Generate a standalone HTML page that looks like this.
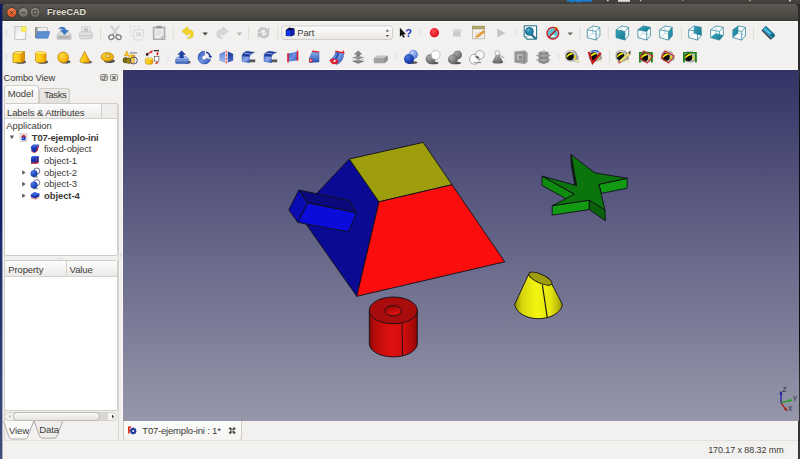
<!DOCTYPE html>
<html>
<head>
<meta charset="utf-8">
<title>FreeCAD</title>
<style>
*{box-sizing:border-box;margin:0;padding:0}
html,body{width:800px;height:459px;overflow:hidden;background:#f2f1f0;font-family:"Liberation Sans",sans-serif;font-size:10px;color:#3c3b37}
.abs{position:absolute}
#desk{left:0;top:0;width:800px;height:459px;background:#2e2d2a}
#deskl{left:0;top:4px;width:3px;height:455px;background:linear-gradient(#0c1a60,#0f1f6a 48%,#1b2d6c 52%,#27386e 72%,#3f4e7c)}
#deskr{left:798px;top:4px;width:2px;height:455px;background:linear-gradient(#2b2b29,#2b2b2c 15%,#0c0c12 19%,#0c0c12 74%,#2a2a2c 84%,#3a3a3a)}
#topbar{left:0;top:0;width:800px;height:4px;background:linear-gradient(#464540,#3c3b37)}
#title{left:2px;top:4px;width:796px;height:17px;border-radius:4px 4px 0 0;background:linear-gradient(#605e56,#58564e 10%,#504e47 50%,#44433e 88%,#343330 100%);}
#title .t{left:45px;top:3px;font-weight:bold;font-size:9px;color:#e6e1d6;letter-spacing:0.1px;line-height:11px;text-shadow:0 -0.6px 0.5px rgba(30,28,24,0.8)}
#win{left:2px;top:20.5px;width:796px;height:438.5px;background:#f2f1f0;border-top:1.3px solid #fdfdfd}
#view{left:123px;top:69.5px;width:675.5px;height:351px;background:linear-gradient(#333366,#9797aa);box-shadow:-1px -1px 0 #fbfbfa}

#combo-t{left:3.6px;top:72px;letter-spacing:-0.15px;font-size:9.4px;line-height:11px;color:#3c3b37}
.dbtn{width:7.5px;height:7px;border:1px solid #8f8d88;border-radius:2px;background:#eceae7}
#tabM{left:4px;top:85px;width:34.5px;height:18px;border:1px solid #d2cfc9;border-bottom:none;border-radius:3px 3px 0 0;background:linear-gradient(#fbfbfa,#f2f1f0)}
#tabT{left:38.5px;top:88px;width:31.5px;height:15px;border:1px solid #d0cdc7;border-bottom:none;border-radius:3px 3px 0 0;background:linear-gradient(#ecebe8,#e2e0dc)}
.tabtx{font-size:9.5px;line-height:11px;color:#3c3b37;letter-spacing:-0.1px}
#tree{left:4px;top:103px;width:114px;height:153px;border:1px solid #d0cdc8;background:#fff;border-radius:2px}
#treeh{left:0;top:0;width:112px;height:15px;background:#efeeed;border-bottom:1px solid #d5d2cd}
#treeh .sec{left:0;top:0;width:97px;height:14px;background:linear-gradient(#fdfdfd,#ebeae8);border-right:1px solid #cfccc6}
.row{left:0;font-size:9.5px;line-height:11px;color:#3c3b37;white-space:nowrap;letter-spacing:-0.1px}
#prop{left:4px;top:260px;width:114px;height:151px;border:1px solid #d0cdc8;background:#fff;border-radius:2px}
#proph{left:0;top:0;width:112px;height:15.5px;background:linear-gradient(#fdfdfd,#ebeae8);border-bottom:1px solid #d5d2cd}
#sb{left:4px;top:412px;width:113px;height:9px;border-radius:4.5px;background:linear-gradient(90deg,#f1f0ee 0,#f1f0ee 9px,#d9d7d3 9px,#d9d7d3 103.5px,#f6f5f4 103.5px);border:1px solid #d3d0cb}
#sbh{left:8px;top:-1px;width:87px;height:9px;border-radius:4px;background:linear-gradient(#fbfbfa,#e4e2df);border:1px solid #bdb9b3}
#dockb{left:4px;top:103px;width:115px;height:337.5px;border:1px solid #d9d7d3;border-radius:3px}

#mtab{left:123px;top:420.5px;width:119px;height:20px;background:linear-gradient(#fbfbfa,#f6f5f4);border:1px solid #cdcac4;border-top:none;border-radius:0 0 3.5px 3.5px}
#stline{left:2px;top:440px;width:796px;height:1px;background:#e3e1dd}
#deskl2{left:2px;top:6px;width:1px;height:453px;background:linear-gradient(#0c1a60,#0f1f6a 48%,#1b2d6c 52%,#27386e 72%,#3f4e7c);opacity:.4}
</style>
</head>
<body>
<div id="desk" class="abs"></div>
<div id="topbar" class="abs"></div>
<svg class="abs" style="left:0;top:0" width="800" height="4" viewBox="0 0 800 4"><g>
<rect x="567" y="0" width="25" height="1.6" fill="#1b7fd0"/><rect x="570" y="1.6" width="3" height="1" fill="#1b7fd0"/><rect x="576" y="1.6" width="6" height="0.8" fill="#1b7fd0"/><rect x="585" y="1.6" width="2" height="0.8" fill="#1b7fd0"/>
<rect x="618" y="0" width="12" height="1.8" fill="#dddcd8"/><rect x="607" y="0" width="1.6" height="1.2" fill="#d8d8d4"/><rect x="640" y="0" width="1.4" height="1.2" fill="#c8c8c4"/>
<rect x="749" y="0" width="1.6" height="1.2" fill="#d8a070"/><rect x="789" y="0" width="1.8" height="1.4" fill="#d8d8d4"/><rect x="682" y="0" width="1.5" height="1" fill="#88877f"/>
</g></svg>
<div id="deskl" class="abs"></div>
<div id="deskr" class="abs"></div>
<div id="title" class="abs"><div class="t abs">FreeCAD</div></div>
<svg class="abs" style="left:0;top:0" width="60" height="22" viewBox="0 0 60 22">
<defs><radialGradient id="gclose" cx="0.5" cy="0.3" r="0.8"><stop offset="0" stop-color="#f58a5a"/><stop offset="1" stop-color="#dd4814"/></radialGradient>
<linearGradient id="gwb" x1="0" y1="0" x2="0" y2="1"><stop offset="0" stop-color="#8f8d86"/><stop offset="1" stop-color="#6a6962"/></linearGradient></defs>
<circle cx="11.7" cy="12.5" r="5.1" fill="#33322e"/><circle cx="11.7" cy="12.5" r="4.5" fill="url(#gclose)"/>
<path d="M10.2,11 L13.2,14 M13.2,11 L10.2,14" stroke="#5e2410" stroke-width="1" stroke-linecap="round"/>
<circle cx="23.4" cy="12.5" r="5.1" fill="#33322e"/><circle cx="23.4" cy="12.5" r="4.5" fill="url(#gwb)"/>
<path d="M21.4,12.6 L25.4,12.6" stroke="#45443f" stroke-width="1.1"/>
<circle cx="35.1" cy="12.5" r="5.1" fill="#33322e"/><circle cx="35.1" cy="12.5" r="4.5" fill="url(#gwb)"/>
<rect x="33.3" y="10.7" width="3.6" height="3.6" fill="none" stroke="#45443f" stroke-width="1"/>
</svg>
<div id="win" class="abs"></div>
<div id="view" class="abs"></div>
<svg id="scene" class="abs" style="left:0;top:0" width="800" height="459" viewBox="0 0 800 459">
<defs>
<linearGradient id="cylside" x1="0" x2="1" y1="0" y2="0"><stop offset="0" stop-color="#8a0606"/><stop offset="0.12" stop-color="#b80b0b"/><stop offset="0.45" stop-color="#e01010"/><stop offset="0.7" stop-color="#d40e0e"/><stop offset="0.92" stop-color="#a80909"/><stop offset="1" stop-color="#8a0606"/></linearGradient>
<linearGradient id="hole" x1="0.2" x2="0.8" y1="0" y2="1"><stop offset="0" stop-color="#960808"/><stop offset="0.55" stop-color="#c80e0e"/><stop offset="1" stop-color="#e01212"/></linearGradient>
<linearGradient id="coneside" x1="0" x2="1" y1="0" y2="0"><stop offset="0" stop-color="#8c8c06"/><stop offset="0.15" stop-color="#d6d60c"/><stop offset="0.45" stop-color="#f4f412"/><stop offset="0.75" stop-color="#e6e60e"/><stop offset="0.93" stop-color="#b4b408"/><stop offset="1" stop-color="#8c8c06"/></linearGradient>
</defs>
<g stroke="#101018" stroke-width="0.9" stroke-linejoin="round">
<!-- pyramid -->
<polygon points="349.3,159 379,201.8 356.8,296.3 298.2,212.9" fill="#0a0a94"/>
<polygon points="349.3,159 423.2,142.4 452,184.7 379,201.8" fill="#9e9e0c"/>
<polygon points="379,201.8 452,184.7 504.8,261.8 356.8,296.3" fill="#fb0d0d"/>
<!-- small box -->
<polygon points="298.8,190 349.3,200.4 356.6,212.7 307.5,203" fill="#0a0a7c"/>
<polygon points="298.8,190 307.5,203 297.8,222.4 288.8,209.8" fill="#0b0bb2"/>
<polygon points="307.5,203 356.6,212.7 348.5,231.8 297.8,222.4" fill="#0c0cda"/>
<!-- cylinder -->
<path d="M369.3,310.4 L369.3,343.5 A24,13.4 0 0 0 417.3,343.5 L417.3,310.4 Z" fill="url(#cylside)"/>
<ellipse cx="393.3" cy="310.4" rx="24" ry="13.4" fill="#a80c0c"/>
<ellipse cx="393.1" cy="310.8" rx="8.2" ry="5.1" fill="url(#hole)"/>
<line x1="402" y1="323.3" x2="402.5" y2="356"/>
<!-- cone -->
<path d="M529,273.6 L514.6,304.4 A24,15.7 0 0 0 562.4,304.4 L551.8,284 Z" fill="url(#coneside)"/>
<ellipse cx="540.4" cy="278.6" rx="12.6" ry="4.4" transform="rotate(24.5 540.4 278.6)" fill="#9c9c0c"/>
<line x1="542.4" y1="285.1" x2="547.3" y2="317.8" stroke-width="1.1"/>
<!-- star -->
<polygon points="571.1,154.6 576.6,185.6 576.6,194.9 571.1,163.9" fill="#052e05"/>
<polygon points="542,176.1 542,185.4 574.3,203.4 574.3,194.1" fill="#0f8c0f"/>
<polygon points="552.2,205.7 589.3,200.2 589.3,209.6 552.2,215.1" fill="#129a12"/>
<polygon points="589.3,200.2 605,210 605.4,220.8 589.3,209.6" fill="#0a630a"/>
<polygon points="598.9,184.3 627.2,178.3 627.2,188.2 601.2,193.4" fill="#129a12"/>
<polygon points="571.1,154.6 594.8,172.8 627.2,178.3 598.9,184.3 605,210 589.3,200.2 552.2,205.7 574.3,194.1 542,176.1 576.6,185.6" fill="#0c740c"/>
</g>
<!-- axis -->
<g stroke-width="1.3" fill="none">
<line x1="781" y1="402.7" x2="781" y2="392" stroke="#2020a0"/>
<line x1="781" y1="402.7" x2="791.5" y2="400.2" stroke="#20a020"/>
<line x1="781" y1="402.7" x2="786.3" y2="410.3" stroke="#a02020"/>
</g>
<polygon points="781,390.5 779.6,394.5 782.4,394.5" fill="#2020a0"/>
<polygon points="792.6,400 788.8,399.2 789.4,402" fill="#20a020"/>
<polygon points="787.2,411.5 783.8,408.8 786.4,407.2" fill="#a02020"/>
<g font-family="Liberation Sans, sans-serif" font-size="6.5" fill="#222230">
<text x="782.6" y="391.8">Z</text><text x="792.8" y="401">Y</text><text x="788" y="411.2">X</text>
</g>
</svg>
<div id="combo-t" class="abs">Combo View</div>
<div class="abs dbtn" style="left:100px;top:74.3px"></div><div class="abs dbtn" style="left:110.3px;top:74.3px"></div>
<svg class="abs" style="left:98px;top:72px" width="22" height="12" viewBox="98 72 22 12"><g stroke="#55534f" stroke-width="0.7" fill="none"><rect x="102" y="76.8" width="2.8" height="2.6"/><path d="M103.6,76 L106,76 L106,78.4"/><path d="M112.4,76.2 L115.6,79.4 M115.6,76.2 L112.4,79.4" stroke-width="1.1"/></g></svg>
<div id="tabT" class="abs"><div class="abs tabtx" style="left:4.6px;top:-0.2px;letter-spacing:-0.4px">Tasks</div></div>
<div id="tabM" class="abs"><div class="abs tabtx" style="left:2.8px;top:1.8px">Model</div></div>
<div id="dockb" class="abs"></div>
<div id="tree" class="abs">
<div id="treeh" class="abs"><div class="sec abs"></div><div class="abs tabtx" style="left:2px;top:2.8px">Labels &amp; Attributes</div></div>
<div class="row abs" style="left:1.3px;top:15.9px">Application</div>
<div class="row abs" style="left:26.8px;top:28.1px;font-weight:bold;letter-spacing:-0.2px">T07-ejemplo-ini</div>
<div class="row abs" style="left:39.0px;top:39.2px">fixed-object</div>
<div class="row abs" style="left:39.0px;top:50.9px">object-1</div>
<div class="row abs" style="left:39.0px;top:62.7px">object-2</div>
<div class="row abs" style="left:39.0px;top:74.4px">object-3</div>
<div class="row abs" style="left:39.0px;top:86.1px;font-weight:bold">object-4</div>
</div>
<div id="prop" class="abs"><div id="proph" class="abs"><div class="abs" style="left:61px;top:0;width:1px;height:15px;background:#d3d0cb"></div><div class="abs tabtx" style="left:3.2px;top:3.3px">Property</div><div class="abs tabtx" style="left:64.6px;top:3.3px">Value</div></div></div>
<svg class="abs" style="left:50px;top:250px" width="80" height="12" viewBox="50 250 80 12"><g fill="#d6d4d0"><rect x="58.6" y="258" width="1" height="1"/><rect x="60.4" y="258" width="1" height="1"/><rect x="62.2" y="258" width="1" height="1"/><rect x="120.4" y="253.4" width="2" height="0.8"/><rect x="120.4" y="255.2" width="2" height="0.8"/><rect x="120.4" y="257" width="2" height="0.8"/></g></svg>
<div id="sb" class="abs"><div id="sbh" class="abs"></div></div>
<svg class="abs" style="left:0;top:410px" width="123" height="32" viewBox="0 410 123 32">
<path d="M34.1,421 L39.6,436 Q40.4,438.2 42.5,438.2 L54.2,438.2 Q56.3,438.2 57.1,436 L62.6,421" fill="#efeeec" stroke="#8f8c86" stroke-width="0.7"/>
<path d="M3.6,421 L8.8,436.6 Q9.6,439 11.8,439 L24.8,439 Q27,439 27.8,436.6 L33.8,421" fill="#fafaf9" stroke="#8f8c86" stroke-width="0.7"/>
<path d="M8.6,415 L10.4,416.5 L8.6,418 Z" fill="#b5b2ad" transform="translate(19,0) scale(-1,1)"/>
<path d="M112,414.6 L114.2,416.5 L112,418.4 Z" fill="#4a4945"/>
</svg>
<div class="abs tabtx" style="left:9px;top:424.5px">View</div>
<div class="abs tabtx" style="left:39.2px;top:424.3px">Data</div>
<div id="mtab" class="abs"></div>
<div id="stline" class="abs"></div>
<div class="abs tabtx" style="left:142.3px;top:425.4px;white-space:nowrap;letter-spacing:-0.2px">T07-ejemplo-ini : 1*</div>
<div class="abs tabtx" style="left:708.2px;top:444.8px;white-space:nowrap;font-size:9px;letter-spacing:-0.1px">170.17 x 88.32 mm</div>
<svg class="abs" style="left:120px;top:420px" width="680" height="39" viewBox="120 420 680 39">
<!-- doc icon -->
<path d="M128,426.6 L131.2,426.6 L131.2,428 L129.6,428 L129.6,429.6 L130.8,429.6 L130.8,431 L129.6,431 L129.6,433.6 L128,433.6 Z" fill="#e02a1a"/>
<circle cx="133.2" cy="431" r="2.9" fill="#17309c"/><circle cx="133.2" cy="431" r="1.1" fill="#f4f4f8"/>
<path d="M133.2,427.4 L133.2,428.4 M133.2,433.6 L133.2,434.6 M129.8,431 L130.6,431 M135.8,431 L136.6,431 M130.8,428.6 L131.4,429.2 M135.6,428.6 L135,429.2 M130.8,433.4 L131.4,432.8 M135.6,433.4 L135,432.8" stroke="#17309c" stroke-width="1.1"/>
<!-- close x -->
<path d="M229.4,427.8 L235,433.4 M235,427.8 L229.4,433.4" stroke="#4b4a46" stroke-width="2.1" stroke-linecap="butt"/>
<path d="M232.2,429.2 L232.2,432 M230.8,430.6 L233.6,430.6" stroke="#f6f5f4" stroke-width="0.7"/>
<!-- size grip -->
<g fill="#fdfdfd"><rect x="794" y="447" width="1.2" height="1.2"/><rect x="791" y="450" width="1.2" height="1.2"/><rect x="794" y="450" width="1.2" height="1.2"/><rect x="788" y="453" width="1.2" height="1.2"/><rect x="791" y="453" width="1.2" height="1.2"/><rect x="794" y="453" width="1.2" height="1.2"/><rect x="785" y="456" width="1.2" height="1.2"/><rect x="788" y="456" width="1.2" height="1.2"/><rect x="791" y="456" width="1.2" height="1.2"/><rect x="794" y="456" width="1.2" height="1.2"/></g>
</svg>
<div id="deskl2" class="abs"></div>
<!--TREEICONS-->
<svg class="abs" style="left:0;top:128px" width="60" height="76" viewBox="0 128 60 76">
<defs><radialGradient id="tbs" cx="0.35" cy="0.3" r="0.8"><stop offset="0" stop-color="#4a78e8"/><stop offset="1" stop-color="#0a2aa0"/></radialGradient>
<linearGradient id="tbb" x1="0" y1="0" x2="1" y2="1"><stop offset="0" stop-color="#2a50d0"/><stop offset="1" stop-color="#0a1a90"/></linearGradient></defs>
<path d="M9.8,135.6 L14,135.6 L11.9,139.2 Z" fill="#5a5955"/>
<path d="M22.2,170.2 L25.6,172.5 L22.2,174.8 Z M22.2,181.8 L25.6,184.1 L22.2,186.4 Z M22.2,193.4 L25.6,195.7 L22.2,198 Z" fill="#5a5955"/>
<!-- doc -->
<rect x="20" y="133.6" width="7" height="7.8" fill="#e4e4e4" stroke="#bdbdbd" stroke-width="0.5"/>
<path d="M21.6,136.4 Q23.4,133.4 25.6,136.2 L25.6,137.4 L21.6,137.4 Z" fill="#e02020"/>
<rect x="21.8" y="136.8" width="3.6" height="3.4" fill="#1430c0"/><rect x="22.6" y="137.6" width="1.2" height="1.4" fill="#8aa6f0"/>
<!-- fixed-object -->
<path d="M30.8,147 L33,144.8 L39.2,144.8 L37.6,150.6 L35.4,152.6 L31.6,151.6 Z" fill="url(#tbb)"/>
<path d="M30.8,147 L33,144.8 L39.2,144.8 L37.2,147 Z" fill="#3a62dc"/>
<path d="M37.2,147 L39.2,144.8 L37.6,150.6 L35.6,152.6 Z" fill="#d02a2a"/><path d="M31.6,151.6 L35.4,152.8" stroke="#d02a2a" stroke-width="0.8"/>
<!-- object-1 -->
<path d="M31,157.6 L32.6,156.2 L38.8,156.2 L38.8,162 L37.2,163.4 L31,163.4 Z" fill="url(#tbb)"/>
<path d="M31,157.6 L32.6,156.2 L38.8,156.2 L37.2,157.6 Z" fill="#3a62dc"/>
<path d="M31,162.6 L37.2,162.6 L38.8,161.4 L38.8,162.4 L37.2,163.8 L31,163.8 Z" fill="#d02a2a"/><path d="M36.6,158 L36.6,163" stroke="#d02a2a" stroke-width="0.7"/>
<!-- object-2/3 -->
<circle cx="36.8" cy="171" r="3" fill="#fff" stroke="#2a3060" stroke-width="0.7"/><circle cx="34" cy="173.4" r="3.5" fill="url(#tbs)"/><path d="M33,177 L38,177" stroke="#3a3a3a" stroke-width="0.7"/>
<circle cx="36.8" cy="182.6" r="3" fill="#fff" stroke="#2a3060" stroke-width="0.7"/><circle cx="34" cy="185" r="3.5" fill="url(#tbs)"/><path d="M33,188.6 L38,188.6" stroke="#3a3a3a" stroke-width="0.7"/>
<!-- object-4 -->
<path d="M30.8,194.6 L34.4,192.2 L39.4,193.6 L39.4,196 L35.6,198.4 L30.8,197 Z" fill="url(#tbb)"/><path d="M30.8,194.6 L34.4,192.2 L39.4,193.6 L35.6,196 Z" fill="#3a62dc"/>
<path d="M30.8,197.8 L35.6,199.2 L39.4,196.8" fill="none" stroke="#d84040" stroke-width="0.7"/>
</svg>
<!--/TREEICONS-->
<!--TB-->
<svg id="tb" class="abs" style="left:0;top:21px" width="800" height="49" viewBox="0 21 800 49">
<defs>
<linearGradient id="gy" x1="0" y1="0" x2="1" y2="1"><stop offset="0" stop-color="#ffe03a"/><stop offset="1" stop-color="#f0a000"/></linearGradient>
<linearGradient id="gyv" x1="0" y1="0" x2="1" y2="0"><stop offset="0" stop-color="#ffdc30"/><stop offset="0.5" stop-color="#ffc810"/><stop offset="1" stop-color="#e89800"/></linearGradient>
<radialGradient id="gys" cx="0.38" cy="0.35" r="0.7"><stop offset="0" stop-color="#ffe040"/><stop offset="1" stop-color="#f0a000"/></radialGradient>
<linearGradient id="gteal" x1="0" y1="0" x2="1" y2="1"><stop offset="0" stop-color="#3aa8c0"/><stop offset="1" stop-color="#157590"/></linearGradient>
<linearGradient id="gblue" x1="0" y1="0" x2="0" y2="1"><stop offset="0" stop-color="#8fb0ee"/><stop offset="1" stop-color="#2450b0"/></linearGradient>
<linearGradient id="gfil" x1="0" y1="0" x2="1" y2="1"><stop offset="0" stop-color="#4a70d0"/><stop offset="0.5" stop-color="#8caaec"/><stop offset="1" stop-color="#3058bc"/></linearGradient>
<linearGradient id="gblue3l" x1="0" y1="0" x2="0" y2="1"><stop offset="0" stop-color="#5c82dc"/><stop offset="1" stop-color="#aac2f6"/></linearGradient>
<linearGradient id="gblue3d" x1="0" y1="0" x2="0" y2="1"><stop offset="0" stop-color="#17348e"/><stop offset="1" stop-color="#4a6ecc"/></linearGradient>
<linearGradient id="gblue3" x1="0" y1="0" x2="0" y2="1"><stop offset="0" stop-color="#2c55c0"/><stop offset="1" stop-color="#7ea2ea"/></linearGradient>
<linearGradient id="gblue2" x1="0" y1="0" x2="1" y2="1"><stop offset="0" stop-color="#2a4fb4"/><stop offset="0.5" stop-color="#6f96e6"/><stop offset="1" stop-color="#2a4fb4"/></linearGradient>
<radialGradient id="gbs" cx="0.35" cy="0.3" r="0.75"><stop offset="0" stop-color="#4a74e0"/><stop offset="1" stop-color="#0a2a90"/></radialGradient>
<radialGradient id="gbs2" cx="0.35" cy="0.3" r="0.75"><stop offset="0" stop-color="#c0d0ff"/><stop offset="1" stop-color="#5078d8"/></radialGradient>
<radialGradient id="ggs" cx="0.35" cy="0.3" r="0.75"><stop offset="0" stop-color="#a8a8a8"/><stop offset="1" stop-color="#606060"/></radialGradient>
<linearGradient id="gpage" x1="0" y1="0" x2="1" y2="1"><stop offset="0" stop-color="#e2e2e2"/><stop offset="0.6" stop-color="#fafafa"/><stop offset="1" stop-color="#e8e8e8"/></linearGradient>
<linearGradient id="gcombo" x1="0" y1="0" x2="0" y2="1"><stop offset="0" stop-color="#fefefe"/><stop offset="1" stop-color="#eae9e7"/></linearGradient>
<radialGradient id="grec" cx="0.4" cy="0.35" r="0.7"><stop offset="0" stop-color="#ff4a4a"/><stop offset="1" stop-color="#d81020"/></radialGradient>
<radialGradient id="gglow" cx="0.5" cy="0.5" r="0.5"><stop offset="0" stop-color="#ffffc0"/><stop offset="0.45" stop-color="#f4ee40"/><stop offset="1" stop-color="#f0e83a" stop-opacity="0.75"/></radialGradient>
</defs>
<rect x="5.2" y="30.7" width="2.4" height="0.9" fill="#dddbd7"/>
<rect x="5.2" y="32.75" width="2.4" height="0.9" fill="#dddbd7"/>
<rect x="5.2" y="34.8" width="2.4" height="0.9" fill="#dddbd7"/>
<rect x="14.8" y="26.6" width="11" height="12.8" fill="url(#gpage)" stroke="#bdbdbd" stroke-width="0.8"/>
<circle cx="23.7" cy="29" r="3.1" fill="url(#gglow)"/>
<path d="M35.3,27.5 L35.3,38 L37,38 L37,27 Z" fill="#555"/>
<path d="M36,27 L36,38 L47.5,38 L47.5,28.2 L41.5,28.2 L40.5,27 Z" fill="#9a9a9a"/>
<rect x="37.5" y="27.6" width="10" height="6" fill="#ececec" stroke="#b0b0b0" stroke-width="0.5"/>
<path d="M37.6,31.6 L49.8,31.6 L47.8,38.2 L36,38.2 Z" fill="#5b8fd2" stroke="#3f74b8" stroke-width="0.6"/>
<path d="M57.3,35 L60,31.3 L68.3,31.3 L71,35 L71,39.2 L57.3,39.2 Z" fill="#dedede" stroke="#a4a4a4" stroke-width="0.6"/>
<rect x="57.6" y="35.2" width="13.1" height="3.8" fill="#c2c2c2"/>
<rect x="58.8" y="36.8" width="10.6" height="0.8" fill="#9c9c9c"/>
<path d="M58.6,28.6 Q61,26 64.2,27.6 Q65.8,28.6 66,30.3 L68.4,30.3 L64.6,34.8 L60.6,30.3 L63,30.3 Q62.6,28.4 58.6,28.6 Z" fill="#3a76ca" stroke="#2a60b0" stroke-width="0.4"/>
<rect x="81.8" y="26.8" width="8.4" height="6" fill="#ececec" stroke="#c4c4c4" stroke-width="0.7"/>
<rect x="84" y="28" width="4" height="3.5" fill="#c8c8c8"/>
<path d="M79.6,33.5 Q79.6,31.8 81.4,31.8 L90.6,31.8 Q92.4,31.8 92.4,33.5 L92.4,37 Q92.4,38.8 90.6,38.8 L81.4,38.8 Q79.6,38.8 79.6,37 Z" fill="#e0e0e0" stroke="#bcbcbc" stroke-width="0.7"/>
<rect x="80.5" y="35.3" width="11" height="1.2" fill="#c6c6c6"/>
<rect x="100.1" y="26" width="1" height="14" fill="#e0deda"/>
<path d="M111.4,26.4 L117.2,34.6 M118.6,26.4 L112.8,34.6" stroke="#d0d0d0" stroke-width="2.1" stroke-linecap="round" fill="none"/>
<ellipse cx="111.4" cy="37.2" rx="2.7" ry="2.2" transform="rotate(-25 111.4 37.2)" fill="none" stroke="#7e7e7e" stroke-width="1.3"/>
<ellipse cx="118.6" cy="37.2" rx="2.7" ry="2.2" transform="rotate(25 118.6 37.2)" fill="none" stroke="#7e7e7e" stroke-width="1.3"/>
<rect x="130.3" y="26.3" width="9.5" height="10" fill="#efefef" stroke="#dedede" stroke-width="0.8"/>
<path d="M134,29.8 L143.7,29.8 L143.7,37.4 L141.2,39.9 L134,39.9 Z" fill="#f1f1f1" stroke="#d2d2d2" stroke-width="0.8"/>
<rect x="136" y="32" width="5.6" height="4.4" fill="#dcdcdc"/>
<rect x="153.2" y="27" width="11.8" height="12.6" fill="#bcbcbc" stroke="#9c9c9c" stroke-width="0.7"/>
<rect x="154.6" y="28.4" width="9" height="10" fill="#ececec"/>
<rect x="156.4" y="25.8" width="5.4" height="2.6" rx="0.8" fill="#9a9a9a"/>
<path d="M156,31 h5.5 M156,32.8 h5.5 M156,34.6 h4" stroke="#d0d0d0" stroke-width="0.7"/>
<path d="M163.2,35.4 L163.2,38.1 L160.5,38.1 Z" fill="#a8a8a8"/>
<rect x="172.8" y="26" width="1" height="14" fill="#e0deda"/>
<path d="M181.8,31.3 L187.6,26.6 L187.6,29.3 Q193.6,29.6 193.4,34.6 Q193.2,38.2 189.2,38.5 L187.4,38.5 Q190.6,37 190.2,34.8 Q189.8,33.2 187.6,33.2 L187.6,35.8 Z" fill="#f4d42a" stroke="#e0b810" stroke-width="0.5"/>
<path d="M202.5,32.4 L207.89999999999998,32.4 L205.2,35.599999999999994 Z" fill="#45443f"/>
<path d="M228.4,31.3 L222.6,26.6 L222.6,29.3 Q216.6,29.6 216.8,34.6 Q217,38.2 221,38.5 L222.8,38.5 Q219.6,37 220,34.8 Q220.4,33.2 222.6,33.2 L222.6,35.8 Z" fill="#d6d6d6" stroke="#c8c8c8" stroke-width="0.5"/>
<path d="M236.70000000000002,32.4 L242.1,32.4 L239.4,35.599999999999994 Z" fill="#b4b2ae"/>
<rect x="248.1" y="26" width="1" height="14" fill="#e0deda"/>
<path d="M258,32 Q258.2,27.6 263,27.4 Q266,27.4 267.4,29.4 L269,27.8 L269,32.4 L264.4,32.4 L266,30.8 Q265,29.6 263,29.6 Q260.4,29.8 260.2,32 Z" fill="#c6c6c6" stroke="#b4b4b4" stroke-width="0.4"/>
<path d="M269,33.4 Q268.8,37.8 264,38 Q261,38 259.6,36 L258,37.6 L258,33 L262.6,33 L261,34.6 Q262,35.8 264,35.8 Q266.6,35.6 266.8,33.4 Z" fill="#c6c6c6" stroke="#b4b4b4" stroke-width="0.4"/>
<rect x="277.2" y="26" width="1" height="14" fill="#e0deda"/>
<rect x="281.8" y="25.9" width="110.8" height="13.6" rx="3" fill="url(#gcombo)" stroke="#cdcac4" stroke-width="0.9"/>
<path d="M285.8,29.9 L289.2,27.5 L294.5,28.5 L294.5,35 L291,36.3 L285.8,36.1 Z" fill="#0a0a10"/>
<path d="M286.2,30.2 L290.8,30.2 L290.8,35.9 L286.2,35.8 Z" fill="#1234f2"/>
<path d="M291.4,30.1 L294.2,28.9 L294.2,34.8 L291.4,35.9 Z" fill="#0a1cc4"/>
<path d="M286.6,29.6 L289.3,27.9 L293.8,28.6 L291,29.7 Z" fill="#0a0a66"/>
<path d="M385.6,31.4 L387.4,29.4 L389.2,31.4 Z M385.6,35 L387.4,37 L389.2,35 Z" fill="#55534e"/>
<path d="M400,28 L400,36.4 L401.9,34.8 L403.2,37.6 L404.5,37 L403.2,34.3 L405.6,34.1 Z" fill="#111" stroke="#111" stroke-width="0.3"/>
<rect x="419.3" y="30.7" width="2.4" height="0.9" fill="#dddbd7"/>
<rect x="419.3" y="32.75" width="2.4" height="0.9" fill="#dddbd7"/>
<rect x="419.3" y="34.8" width="2.4" height="0.9" fill="#dddbd7"/>
<circle cx="434.4" cy="32.7" r="4.7" fill="url(#grec)"/>
<rect x="453" y="29" width="7.6" height="7.4" fill="#cbcbcb"/><rect x="453" y="29" width="7.6" height="2.4" fill="#d8d8d8"/>
<rect x="472.4" y="26.2" width="12.2" height="12.6" fill="#f3f2ee" stroke="#b7b3a4" stroke-width="0.8"/>
<rect x="472.4" y="26.2" width="12.2" height="2.8" fill="#b3a868" stroke="#9c9050" stroke-width="0.5"/>
<path d="M474.5,32.5 h7 M474.5,34.5 h4 M474.5,36.5 h7" stroke="#dcdad2" stroke-width="0.7"/>
<path d="M476.4,35.8 L483.4,30.6 L484.8,32.2 L477.8,37.2 L475.8,37.6 Z" fill="#f0a030" stroke="#c87818" stroke-width="0.4"/>
<path d="M497.2,28.4 L505.4,32.9 L497.2,37.4 Z" fill="#c4c4c4"/>
<rect x="515.0" y="30.7" width="2.4" height="0.9" fill="#dddbd7"/>
<rect x="515.0" y="32.75" width="2.4" height="0.9" fill="#dddbd7"/>
<rect x="515.0" y="34.8" width="2.4" height="0.9" fill="#dddbd7"/>
<path d="M524.2,25.8 L536.6,25.8 L536.6,39.2 L526.8,39.2 L524.2,36.6 Z" fill="#fafcfd" stroke="#1b6c84" stroke-width="1"/><path d="M524.2,36.6 L526.8,36.6 L526.8,39.2" fill="none" stroke="#1b6c84" stroke-width="0.6"/>
<path d="M531.5,34.6 L535,38" stroke="#15607a" stroke-width="2" stroke-linecap="round"/>
<circle cx="529.4" cy="31.4" r="3.9" fill="#2287ae" stroke="#125a72" stroke-width="0.9"/><circle cx="528.4" cy="30.2" r="1.6" fill="#5cbcdc" opacity="0.8"/>
<circle cx="552.8" cy="33.2" r="5" fill="#5cc0d4"/><path d="M548.6,35.4 Q552,38.6 556.4,36 Q553,33.2 548.6,35.4Z" fill="#f4fafa" opacity="0.8"/>
<path d="M556.4,26.4 L558.4,27.8 L555.8,30.4 L554.4,29.2 Z" fill="#f0d020"/>
<circle cx="552.8" cy="33.2" r="5.8" fill="none" stroke="#bc1616" stroke-width="1.3"/>
<path d="M548.6,37.4 L557,29" stroke="#bc1616" stroke-width="1.4"/>
<path d="M567.5,32.4 L572.9000000000001,32.4 L570.2,35.599999999999994 Z" fill="#6b6964"/>
<rect x="579.5" y="26" width="1" height="14" fill="#e0deda"/>
<path d="M587.25,29.8 L592.7,25.9 L599.75,27.3 L600.0,35.4 L596.1,40.1 L587.25,37.6 Z" fill="#fbfdfd"/>
<g fill="none" stroke="#8fc3d0" stroke-width="0.6"><path d="M592.4,33.25 L592.7,25.9 M592.4,33.25 L587.25,37.6 M592.4,33.25 L600.0,35.4"/></g>
<g fill="none" stroke="#2e8299" stroke-width="0.75" stroke-linejoin="round"><path d="M587.25,29.8 L592.7,25.9 L599.75,27.3 L600.0,35.4 L596.1,40.1 L587.25,37.6 Z"/><path d="M587.25,29.8 L596.1,31.4 L599.75,27.3 M596.1,31.4 L596.1,40.1"/></g>
<rect x="607.8" y="26" width="1" height="14" fill="#e0deda"/>
<path d="M616.05,29.8 L621.5,25.9 L628.55,27.3 L628.8,35.4 L624.9,40.1 L616.05,37.6 Z" fill="#fbfdfd"/>
<g fill="none" stroke="#8fc3d0" stroke-width="0.6"><path d="M621.2,33.25 L621.5,25.9 M621.2,33.25 L616.05,37.6 M621.2,33.25 L628.8,35.4"/></g>
<path d="M616.05,29.8 L624.9,31.4 L624.9,40.1 L616.05,37.6 Z" fill="url(#gteal)"/>
<g fill="none" stroke="#2e8299" stroke-width="0.75" stroke-linejoin="round"><path d="M616.05,29.8 L621.5,25.9 L628.55,27.3 L628.8,35.4 L624.9,40.1 L616.05,37.6 Z"/><path d="M616.05,29.8 L624.9,31.4 L628.55,27.3 M624.9,31.4 L624.9,40.1"/></g>
<path d="M637.85,29.8 L643.3,25.9 L650.35,27.3 L650.6,35.4 L646.7,40.1 L637.85,37.6 Z" fill="#fbfdfd"/>
<g fill="none" stroke="#8fc3d0" stroke-width="0.6"><path d="M643.0,33.25 L643.3,25.9 M643.0,33.25 L637.85,37.6 M643.0,33.25 L650.6,35.4"/></g>
<path d="M637.85,29.8 L643.3,25.9 L650.35,27.3 L646.7,31.4 Z" fill="url(#gteal)"/>
<g fill="none" stroke="#2e8299" stroke-width="0.75" stroke-linejoin="round"><path d="M637.85,29.8 L643.3,25.9 L650.35,27.3 L650.6,35.4 L646.7,40.1 L637.85,37.6 Z"/><path d="M637.85,29.8 L646.7,31.4 L650.35,27.3 M646.7,31.4 L646.7,40.1"/></g>
<path d="M659.65,29.8 L665.1,25.9 L672.15,27.3 L672.4,35.4 L668.5,40.1 L659.65,37.6 Z" fill="#fbfdfd"/>
<g fill="none" stroke="#8fc3d0" stroke-width="0.6"><path d="M664.8,33.25 L665.1,25.9 M664.8,33.25 L659.65,37.6 M664.8,33.25 L672.4,35.4"/></g>
<path d="M668.5,31.4 L672.15,27.3 L672.4,35.4 L668.5,40.1 Z" fill="url(#gteal)"/>
<g fill="none" stroke="#2e8299" stroke-width="0.75" stroke-linejoin="round"><path d="M659.65,29.8 L665.1,25.9 L672.15,27.3 L672.4,35.4 L668.5,40.1 L659.65,37.6 Z"/><path d="M659.65,29.8 L668.5,31.4 L672.15,27.3 M668.5,31.4 L668.5,40.1"/></g>
<rect x="680.9" y="26" width="1" height="14" fill="#e0deda"/>
<path d="M688.65,29.8 L694.1,25.9 L701.15,27.3 L701.4,35.4 L697.5,40.1 L688.65,37.6 Z" fill="#fbfdfd"/>
<g fill="none" stroke="#8fc3d0" stroke-width="0.6"><path d="M693.8,33.25 L694.1,25.9 M693.8,33.25 L688.65,37.6 M693.8,33.25 L701.4,35.4"/></g>
<path d="M694.1,25.9 L701.15,27.3 L701.4,35.4 L693.8,33.25 Z" fill="url(#gteal)"/>
<g fill="none" stroke="#2e8299" stroke-width="0.75" stroke-linejoin="round"><path d="M688.65,29.8 L694.1,25.9 L701.15,27.3 L701.4,35.4 L697.5,40.1 L688.65,37.6 Z"/><path d="M688.65,29.8 L697.5,31.4 L701.15,27.3 M697.5,31.4 L697.5,40.1"/></g>
<path d="M710.65,29.8 L716.1,25.9 L723.15,27.3 L723.4,35.4 L719.5,40.1 L710.65,37.6 Z" fill="#fbfdfd"/>
<g fill="none" stroke="#8fc3d0" stroke-width="0.6"><path d="M715.8,33.25 L716.1,25.9 M715.8,33.25 L710.65,37.6 M715.8,33.25 L723.4,35.4"/></g>
<path d="M710.65,37.6 L719.5,40.1 L723.4,35.4 L715.8,33.25 Z" fill="url(#gteal)"/>
<g fill="none" stroke="#2e8299" stroke-width="0.75" stroke-linejoin="round"><path d="M710.65,29.8 L716.1,25.9 L723.15,27.3 L723.4,35.4 L719.5,40.1 L710.65,37.6 Z"/><path d="M710.65,29.8 L719.5,31.4 L723.15,27.3 M719.5,31.4 L719.5,40.1"/></g>
<path d="M732.85,29.8 L738.3,25.9 L745.35,27.3 L745.6,35.4 L741.7,40.1 L732.85,37.6 Z" fill="#fbfdfd"/>
<g fill="none" stroke="#8fc3d0" stroke-width="0.6"><path d="M738.0,33.25 L738.3,25.9 M738.0,33.25 L732.85,37.6 M738.0,33.25 L745.6,35.4"/></g>
<path d="M732.85,29.8 L738.3,25.9 L738.0,33.25 L732.85,37.6 Z" fill="url(#gteal)"/>
<g fill="none" stroke="#2e8299" stroke-width="0.75" stroke-linejoin="round"><path d="M732.85,29.8 L738.3,25.9 L745.35,27.3 L745.6,35.4 L741.7,40.1 L732.85,37.6 Z"/><path d="M732.85,29.8 L741.7,31.4 L745.35,27.3 M741.7,31.4 L741.7,40.1"/></g>
<rect x="753.1" y="26" width="1" height="14" fill="#e0deda"/>
<path d="M762.2,29.4 L771.4,38.4 L770.7,39.7 L761.5,30.5 Z" fill="#2e2626"/>
<path d="M774.8,34.6 L774.9,36.2 L770.9,39.8 L771.4,38.4 Z" fill="#0d4e66"/>
<path d="M765.7,26.1 L774.8,34.6 L771.4,38.4 L762.2,29.4 Z" fill="#1f88aa"/>
<path d="M764.6,28.6 L770.4,34" stroke="#5cc4ec" stroke-width="1.8" fill="none"/>
<path d="M771.2,34.2 L773.6,36.4" stroke="#136684" stroke-width="2.6" fill="none"/>
<path d="M765.7,26.1 L774.8,34.6" stroke="#0f5e7a" stroke-width="0.7" fill="none"/>
<rect x="5.2" y="55.2" width="2.4" height="0.9" fill="#dddbd7"/>
<rect x="5.2" y="57.25" width="2.4" height="0.9" fill="#dddbd7"/>
<rect x="5.2" y="59.3" width="2.4" height="0.9" fill="#dddbd7"/>
<ellipse cx="20.5" cy="62" rx="5.5" ry="1.8" fill="#3a3a38" opacity="0.85"/>
<path d="M13,53.4 L16,51.6 L24.4,51.6 L24.4,60.4 L21.4,62.6 L13,62.6 Z" fill="url(#gyv)" stroke="#b47c00" stroke-width="0.7"/>
<path d="M13,53.8 L16,51.6 L24.4,51.6 L21.4,53.8 Z" fill="#fff08a" stroke="#c08800" stroke-width="0.4"/><path d="M21.4,53.8 L24.4,51.6 L24.4,60.4 L21.4,62.6 Z" fill="#e29400" stroke="#b47c00" stroke-width="0.4"/>
<ellipse cx="42.6" cy="62" rx="5.5" ry="1.8" fill="#3a3a38" opacity="0.85"/>
<path d="M35.6,53 L35.6,61 A5.2,1.7 0 0 0 46,61 L46,53 Z" fill="url(#gyv)" stroke="#b47c00" stroke-width="0.7"/><ellipse cx="40.8" cy="53" rx="5.2" ry="1.6" fill="#ffe860" stroke="#e0a000" stroke-width="0.5"/>
<ellipse cx="65.5" cy="61.8" rx="5" ry="1.8" fill="#3a3a38" opacity="0.85"/>
<circle cx="63.2" cy="57.4" r="5.4" fill="url(#gys)" stroke="#b47c00" stroke-width="0.7"/>
<ellipse cx="87" cy="62" rx="5" ry="1.6" fill="#3a3a38" opacity="0.85"/>
<path d="M84.6,51.4 L79.8,61.2 A5,1.5 0 0 0 89.8,61.2 Z" fill="url(#gyv)" stroke="#b47c00" stroke-width="0.7"/>
<ellipse cx="109.5" cy="61" rx="5.5" ry="2" fill="#3a3a38" opacity="0.85"/>
<ellipse cx="107.3" cy="56.9" rx="6.2" ry="4.3" fill="url(#gys)" stroke="#b47c00" stroke-width="0.7"/><ellipse cx="107.6" cy="56" rx="2.7" ry="1.4" fill="#ffe98a" stroke="#a87000" stroke-width="0.7"/>
<path d="M126.6,50.8 L124.4,55.8 L128.9,55.8 Z" fill="#ffcc18" stroke="#c08000" stroke-width="0.5"/>
<path d="M129,56.4 L130.4,55 L134.6,55 L134.6,62.4 L133.2,63.6 L129,63.6 Z" fill="url(#gyv)" stroke="#b47c00" stroke-width="0.5"/>
<path d="M129.6,52.9 L137.2,52.9" stroke="#55534e" stroke-width="0.8"/>
<circle cx="125.6" cy="60.2" r="2.6" fill="#7c7010" stroke="#3c3806" stroke-width="0.6"/><circle cx="128.2" cy="60.8" r="2.5" fill="#9a8a12" stroke="#3c3806" stroke-width="0.6"/>
<circle cx="133.8" cy="60.5" r="3.5" fill="#e8e8f4" fill-opacity="0.3" stroke="#2c306c" stroke-width="0.8"/>
<path d="M145.4,59 L145.4,63 A3.7,1.3 0 0 0 152.8,63 L152.8,59 Z" fill="url(#gyv)" stroke="#b47c00" stroke-width="0.5"/><ellipse cx="149.1" cy="59" rx="3.7" ry="1.2" fill="#ffe860" stroke="#c89000" stroke-width="0.4"/>
<circle cx="147.2" cy="54.4" r="1.3" fill="#111"/>
<path d="M148.4,53.4 L151.6,51.6" stroke="#e01818" stroke-width="1.1"/><path d="M153,50.6 L150.2,51 L151.6,53.2 Z" fill="#e01818"/>
<rect x="153.7" y="50.1" width="5.4" height="1.2" fill="#222"/>
<rect x="154.5" y="56.5" width="4.4" height="4.6" fill="#fff" stroke="#666" stroke-width="0.7"/>
<path d="M157.5,52.8 L157.5,54.6" stroke="#e01818" stroke-width="1"/><path d="M157.5,51.8 L156.2,53.4 L158.8,53.4 Z M157.5,55.6 L156.2,54 L158.8,54 Z" fill="#e01818"/>
<path d="M158.4,62 L156.4,63" stroke="#e01818" stroke-width="1"/><path d="M154.8,63.8 L156.8,61.8 L157.6,63.6 Z" fill="#e01818"/>
<rect x="167.0" y="55.2" width="2.4" height="0.9" fill="#dddbd7"/>
<rect x="167.0" y="57.25" width="2.4" height="0.9" fill="#dddbd7"/>
<rect x="167.0" y="59.3" width="2.4" height="0.9" fill="#dddbd7"/>
<path d="M187,61 L190.4,61 L190.4,63.2 L186,63.8 Z" fill="#2a2a2a" opacity="0.8"/>
<path d="M175.6,59.4 L188.6,59.4 L188.6,62.6 Q188.6,63.6 187.6,63.6 L176.6,63.6 Q175.6,63.6 175.6,62.6 Z" fill="url(#gblue)" stroke="#1c3c98" stroke-width="0.4"/>
<path d="M175.6,59.4 L177.4,56.8 L186.8,56.8 L188.6,59.4 Z" fill="#9dbcf4" stroke="#3c5cb8" stroke-width="0.4"/>
<path d="M181.6,50.8 L185.6,54.6 L183.4,54.6 L183.4,58 L179.9,58 L179.9,54.6 L177.8,54.6 Z" fill="#1f43aa" stroke="#14307c" stroke-width="0.4"/>
<path d="M204.4,51 A6.5,6.5 0 1 0 210.6,59.6 L206.4,58.4 A2.4,2.4 0 1 1 204.4,55.2 Z" fill="url(#gblue2)" stroke="#1c3c98" stroke-width="0.5"/>
<path d="M206,52.2 Q210,53.2 210.2,57" fill="none" stroke="#16349a" stroke-width="1.4"/><path d="M210.4,58.6 L208.4,55.8 L212,56 Z" fill="#16349a"/>
<circle cx="204.6" cy="57.6" r="1.1" fill="#fff"/>
<path d="M219.8,54 L224.8,51.8 L224.8,62.2 L219.8,60.4 Z" fill="url(#gblue3l)" stroke="#5474c8" stroke-width="0.4"/><path d="M232.9,54 L228,51.8 L228,62.2 L232.9,60.4 Z" fill="url(#gblue3d)" stroke="#1c3890" stroke-width="0.4"/>
<path d="M226.3,50.6 L226.3,63.8" stroke="#e81818" stroke-width="0.9" stroke-dasharray="2.4 1.1"/>
<path d="M249.4,59.6 L255.2,59.6 L255.2,62.2 L248,62.2 Z" fill="#3c3c3c" opacity="0.85"/>
<path d="M242,55.6 L249.4,56.6 L249.4,62.8 L242,61.4 Z" fill="url(#gfil)" stroke="#2448a8" stroke-width="0.4"/>
<path d="M242,55.6 Q242.8,51.8 247.6,51.2 L254.6,52.4 Q250.4,53.2 249.4,56.6 Z" fill="#1a3a9c" stroke="#14307c" stroke-width="0.4"/>
<path d="M244.2,53.2 L251.2,54.2" stroke="#9db8f4" stroke-width="0.9"/>
<path d="M271.4,59.6 L277.2,59.6 L277.2,62.2 L270,62.2 Z" fill="#3c3c3c" opacity="0.85"/>
<path d="M264,55.6 L271.4,56.6 L271.4,62.8 L264,61.4 Z" fill="url(#gfil)" stroke="#2448a8" stroke-width="0.4"/>
<path d="M264,55.6 Q264.8,51.8 269.6,51.2 L276.6,52.4 Q272.4,53.2 271.4,56.6 Z" fill="#1a3a9c" stroke="#14307c" stroke-width="0.4"/>
<path d="M266.2,53.2 L273.2,54.2" stroke="#9db8f4" stroke-width="0.9"/>
<path d="M288,53.8 L297.4,51.4 L297.4,60.2 L288,61.8 Z" fill="url(#gblue2)"/><rect x="287.2" y="53.2" width="1.6" height="9.2" fill="#e01c2c"/><rect x="296.7" y="50.8" width="1.6" height="9.8" fill="#e01c2c"/>
<path d="M312.4,51.6 L319,52.6 L319,62 L309.4,62.6 L309.4,58.2 Z" fill="url(#gblue)" stroke="#1c3c98" stroke-width="0.4"/><path d="M312.2,51.2 L319.2,52.2" stroke="#e01c2c" stroke-width="1.3"/><rect x="309.2" y="58.8" width="3.2" height="3.4" fill="#e01c2c"/><rect x="310.1" y="59.8" width="1.3" height="1.4" fill="#fff"/>
<path d="M335.8,51.6 L343.8,53.4 Q343.6,61.6 336.6,64.6 L330.6,59.4 Q335,57.2 335.8,51.6 Z" fill="url(#gblue2)" stroke="#1c3c98" stroke-width="0.4"/>
<path d="M338,52.6 Q338,58.6 333,61.6" fill="none" stroke="#17348e" stroke-width="1.6" opacity="0.7"/>
<path d="M335.4,51.2 L344.2,53.2 M342.8,50.4 L344.2,53.2" stroke="#e01c2c" stroke-width="1.2"/><path d="M329.4,60.4 L332.4,58.4 L338.6,60 L337,64 L332.6,64.2 Z" fill="#e01c2c"/><rect x="333.6" y="60" width="1.9" height="1.9" fill="#fff"/>
<path d="M358.2,50.4 L362.6,54.4 L360.2,54.4 L360.2,56 L356.2,56 L356.2,54.4 L353.8,54.4 Z" fill="#848484"/>
<path d="M352,57.6 L358.2,55.8 L364.4,57.6 L358.2,59.4 Z" fill="#929292"/><path d="M352,61.2 L358.2,59.2 L364.4,61.2 L358.2,63.8 Z" fill="#7e7e7e"/><path d="M352,59.2 L358.2,61 L364.4,59.2" fill="none" stroke="#b8b8b8" stroke-width="0.6"/>
<path d="M373.8,58 L377.2,55.8 L387.6,55.8 L387.6,60.6 L384.4,63.2 L373.8,63.2 Z" fill="#a2a2a2"/><path d="M373.8,58 L377.2,55.8 L387.6,55.8 L384.4,58 Z" fill="#c8c8c8"/><path d="M384.4,58 L387.6,55.8 L387.6,60.6 L384.4,63.2 Z" fill="#8c8c8c"/>
<rect x="395.3" y="55.2" width="2.4" height="0.9" fill="#dddbd7"/>
<rect x="395.3" y="57.25" width="2.4" height="0.9" fill="#dddbd7"/>
<rect x="395.3" y="59.3" width="2.4" height="0.9" fill="#dddbd7"/>
<ellipse cx="412.5" cy="62.6" rx="5" ry="1.4" fill="#3a3a38" opacity="0.85"/>
<circle cx="413.3" cy="54.6" r="4.5" fill="url(#gbs2)" stroke="#4468c8" stroke-width="0.4"/><circle cx="409" cy="59" r="5" fill="url(#gbs)"/>
<ellipse cx="433.5" cy="63" rx="5" ry="1.3" fill="#3a3a38" opacity="0.85"/>
<circle cx="430.6" cy="59" r="5" fill="url(#ggs)"/><circle cx="435.6" cy="55" r="4.5" fill="#fdfdfd" stroke="#a0a0a0" stroke-width="0.6"/>
<ellipse cx="456" cy="63" rx="5" ry="1.3" fill="#3a3a38" opacity="0.85"/>
<path d="M452.75,59.5 L457.7,54.7" stroke="#747474" stroke-width="7" stroke-linecap="round"/><circle cx="457.6" cy="54.8" r="4.4" fill="url(#ggs)"/><circle cx="452.8" cy="59.4" r="4.9" fill="url(#ggs)"/>
<circle cx="474.5" cy="59.2" r="5" fill="#fbfbfb" stroke="#8a8a8a" stroke-width="0.7"/><circle cx="479.7" cy="55" r="4.5" fill="#fbfbfb" fill-opacity="0.7" stroke="#8a8a8a" stroke-width="0.7"/>
<path d="M475.4,56 Q478.6,55 479.6,58.4 Q476.4,59.4 475.4,56 Z" fill="#6e6e6e"/><path d="M474,62.6 L481.4,62.6" stroke="#7a7a7a" stroke-width="0.8"/>
<path d="M497.3,52 L492.4,62 A5.4,1.6 0 0 0 503.2,62 Z" fill="url(#ggs)"/><circle cx="497.4" cy="53" r="2.4" fill="#f4f4f4" stroke="#8c8c8c" stroke-width="0.6"/><path d="M499.2,54.8 L504.4,58.2" stroke="#8c8c8c" stroke-width="0.9"/>
<path d="M514.4,51.6 L524.4,50.6 L527.6,52.6 L527.6,62 L524.4,64 L514.4,62.4 Z" fill="#9c9c9c"/><rect x="516.6" y="53.8" width="6.4" height="6.6" fill="#c4c4c4" stroke="#7c7c7c" stroke-width="0.6"/><path d="M524.4,50.6 L524.4,64" stroke="#7c7c7c" stroke-width="0.6"/><rect x="518.6" y="55.6" width="3.4" height="3.8" fill="#8a8a8a"/>
<path d="M538.6,52.4 L543.8,50.6 L548.6,52.4 L548.6,62.4 L543.8,64 L538.6,62.4 Z" fill="#8c8c8c"/><path d="M536.4,55.6 L543.6,54 L550.4,55.6 L543.6,57.4 Z" fill="#a8a8a8" stroke="#6e6e6e" stroke-width="0.4"/><path d="M536.4,60 L543.6,58.4 L550.4,60 L543.6,61.8 Z" fill="#a8a8a8" stroke="#6e6e6e" stroke-width="0.4"/><path d="M539.6,51.6 L543.8,50.4 L547.8,51.6 L543.8,52.8 Z" fill="#bcbcbc"/>
<rect x="557.4" y="55.2" width="2.4" height="0.9" fill="#dddbd7"/>
<rect x="557.4" y="57.25" width="2.4" height="0.9" fill="#dddbd7"/>
<rect x="557.4" y="59.3" width="2.4" height="0.9" fill="#dddbd7"/>
<path d="M573.8,54 L578.4,55.4 L578.5999999999999,59.6 L574.8,60.6 Z" fill="#8a8a8a" opacity="0.7"/>
<path d="M565.5999999999999,54 Q565.8,50.8 569.1999999999999,50.6 L573.8,50.8 Q576.5999999999999,51.2 576.8,54.4 L576.8,58 Q576.4,61 572.8,61.2 L568.8,60.8 Q565.8,60.2 565.5999999999999,57.4 Z" fill="#bcbcbc" stroke="#7a7a7a" stroke-width="0.5"/>
<path d="M566.1999999999999,53.2 Q566.8,51.4 569.4,51.2 L573.4,51.4" fill="none" stroke="#ececec" stroke-width="0.8"/>
<ellipse cx="570.0999999999999" cy="56.3" rx="3.7" ry="4" fill="#0b0b0b"/>
<path d="M566.5999999999999,56.2 Q568.1999999999999,53 572.1999999999999,52.8 L573.1999999999999,54 Q569.4,54.6 567.0,57.6 Z" fill="#f2ea00"/>
<rect x="574.0" y="55.6" width="1.9" height="3" fill="#e4dc10"/>
<path d="M574.6,60.6 L579.6,62.2" stroke="#8c8c7c" stroke-width="2" opacity="0.5"/><path d="M574.4,60.2 L579.4,61.8" stroke="#ece8a4" stroke-width="1.3"/>
<path d="M597.2,54 L601.8000000000001,55.4 L602.0,59.6 L598.2,60.6 Z" fill="#8a8a8a" opacity="0.7"/>
<path d="M589.0,54 Q589.2,50.8 592.6,50.6 L597.2,50.8 Q600.0,51.2 600.2,54.4 L600.2,58 Q599.8000000000001,61 596.2,61.2 L592.2,60.8 Q589.2,60.2 589.0,57.4 Z" fill="#bcbcbc" stroke="#7a7a7a" stroke-width="0.5"/>
<path d="M589.6,53.2 Q590.2,51.4 592.8000000000001,51.2 L596.8000000000001,51.4" fill="none" stroke="#ececec" stroke-width="0.8"/>
<ellipse cx="593.5" cy="56.3" rx="3.7" ry="4" fill="#0b0b0b"/>
<path d="M590.0,56.2 Q591.6,53 595.6,52.8 L596.6,54 Q592.8000000000001,54.6 590.4000000000001,57.6 Z" fill="#f2ea00"/>
<rect x="597.4000000000001" y="55.6" width="1.9" height="3" fill="#e4dc10"/>
<path d="M598,60.6 L602,61.8" stroke="#ece8a4" stroke-width="1.2"/>
<path d="M591.4,51.4 Q595,49.6 598.6,51.6" fill="none" stroke="#2a50c8" stroke-width="1.3"/>
<path d="M588.8,52 L592.6,62.8 L600.8,53" fill="none" stroke="#7a0c0c" stroke-width="2.1" stroke-linejoin="miter"/><path d="M588.8,52 L592.6,62.8 L600.8,53" fill="none" stroke="#e41c1c" stroke-width="1.3" stroke-linejoin="miter"/>
<rect x="608.9" y="50.5" width="1" height="14" fill="#e0deda"/>
<path d="M624.2,54 L628.8000000000001,55.4 L629.0,59.6 L625.2,60.6 Z" fill="#8a8a8a" opacity="0.7"/>
<path d="M616.0,54 Q616.2,50.8 619.6,50.6 L624.2,50.8 Q627.0,51.2 627.2,54.4 L627.2,58 Q626.8000000000001,61 623.2,61.2 L619.2,60.8 Q616.2,60.2 616.0,57.4 Z" fill="#bcbcbc" stroke="#7a7a7a" stroke-width="0.5"/>
<path d="M616.6,53.2 Q617.2,51.4 619.8000000000001,51.2 L623.8000000000001,51.4" fill="none" stroke="#ececec" stroke-width="0.8"/>
<ellipse cx="620.5" cy="56.3" rx="3.7" ry="4" fill="#0b0b0b"/>
<path d="M617.0,56.2 Q618.6,53 622.6,52.8 L623.6,54 Q619.8000000000001,54.6 617.4000000000001,57.6 Z" fill="#f2ea00"/>
<rect x="624.4000000000001" y="55.6" width="1.9" height="3" fill="#e4dc10"/>
<path d="M625.2,60.6 L629.6,61.8" stroke="#ece8a4" stroke-width="1.2"/>
<path d="M619.4,60.4 L628.4,52.4 L630.2,54.4 L621,62.4 Z" fill="#f0e27c" stroke="#8a7a30" stroke-width="0.5"/><path d="M628.4,52.4 L630.6,50.6 L630.2,54.4 Z" fill="#2a2a2a"/><path d="M619.4,60.4 L621,62.4 L619.4,63.4 Q617.8,63.2 618,61.6 Z" fill="#e07a7a" stroke="#a04848" stroke-width="0.4"/>
<path d="M648.2,55 L652.8000000000001,56.4 L653.0,60.6 L649.2,61.6 Z" fill="#8a8a8a" opacity="0.7"/>
<path d="M640.0,55 Q640.2,51.8 643.6,51.6 L648.2,51.8 Q651.0,52.2 651.2,55.4 L651.2,59 Q650.8000000000001,62 647.2,62.2 L643.2,61.8 Q640.2,61.2 640.0,58.4 Z" fill="#bcbcbc" stroke="#7a7a7a" stroke-width="0.5"/>
<path d="M640.6,54.2 Q641.2,52.4 643.8000000000001,52.2 L647.8000000000001,52.4" fill="none" stroke="#ececec" stroke-width="0.8"/>
<ellipse cx="644.5" cy="57.3" rx="3.7" ry="4" fill="#0b0b0b"/>
<path d="M641.0,57.2 Q642.6,54 646.6,53.8 L647.6,55 Q643.8000000000001,55.6 641.4000000000001,58.6 Z" fill="#f2ea00"/>
<rect x="648.4000000000001" y="56.6" width="1.9" height="3" fill="#e4dc10"/>
<path d="M639,52 L652.8,52 L652.8,62.4 L651,62.4 L651,53.6 L640.8,53.6 L640.8,62.4 L639,62.4 Z" fill="#1c861c"/>
<path d="M643.6,51 L652.8,56 L647.3,63 L639.8,58 Z" fill="none" stroke="#cc2424" stroke-width="1.2" stroke-linejoin="round" opacity="0.9"/>
<path d="M669.8,54.4 L674.4,55.8 L674.5999999999999,60.0 L670.8,61.0 Z" fill="#8a8a8a" opacity="0.7"/>
<path d="M661.5999999999999,54.4 Q661.8,51.2 665.1999999999999,51.0 L669.8,51.2 Q672.5999999999999,51.6 672.8,54.8 L672.8,58.4 Q672.4,61.4 668.8,61.6 L664.8,61.2 Q661.8,60.6 661.5999999999999,57.8 Z" fill="#bcbcbc" stroke="#7a7a7a" stroke-width="0.5"/>
<path d="M662.1999999999999,53.6 Q662.8,51.8 665.4,51.6 L669.4,51.8" fill="none" stroke="#ececec" stroke-width="0.8"/>
<ellipse cx="666.0999999999999" cy="56.7" rx="3.7" ry="4" fill="#0b0b0b"/>
<path d="M662.5999999999999,56.6 Q664.1999999999999,53.4 668.1999999999999,53.2 L669.1999999999999,54.4 Q665.4,55.0 663.0,58.0 Z" fill="#f2ea00"/>
<rect x="670.0" y="56.0" width="1.9" height="3" fill="#e4dc10"/>
<path d="M665.0,51 L674.1999999999999,56 L668.6999999999999,63 L661.1999999999999,58 Z" fill="none" stroke="#cc2424" stroke-width="1.2" stroke-linejoin="round" opacity="0.9"/>
<path d="M692.2,55 L696.8000000000001,56.4 L697.0,60.6 L693.2,61.6 Z" fill="#8a8a8a" opacity="0.7"/>
<path d="M684.0,55 Q684.2,51.8 687.6,51.6 L692.2,51.8 Q695.0,52.2 695.2,55.4 L695.2,59 Q694.8000000000001,62 691.2,62.2 L687.2,61.8 Q684.2,61.2 684.0,58.4 Z" fill="#bcbcbc" stroke="#7a7a7a" stroke-width="0.5"/>
<path d="M684.6,54.2 Q685.2,52.4 687.8000000000001,52.2 L691.8000000000001,52.4" fill="none" stroke="#ececec" stroke-width="0.8"/>
<ellipse cx="688.5" cy="57.3" rx="3.7" ry="4" fill="#0b0b0b"/>
<path d="M685.0,57.2 Q686.6,54 690.6,53.8 L691.6,55 Q687.8000000000001,55.6 685.4000000000001,58.6 Z" fill="#f2ea00"/>
<rect x="692.4000000000001" y="56.6" width="1.9" height="3" fill="#e4dc10"/>
<path d="M683,52 L696.8,52 L696.8,62.4 L695,62.4 L695,53.6 L684.8,53.6 L684.8,62.4 L683,62.4 Z" fill="#1c861c"/>
</svg>
<div class="abs" style="left:297.2px;top:27.9px;font-size:9.3px;line-height:11px;color:#3c3b37">Part</div>
<div class="abs" style="left:405.2px;top:26.8px;font-size:11px;line-height:12px;font-weight:bold;color:#1a30b8">?</div>
<!--/TB-->
</body>
</html>
